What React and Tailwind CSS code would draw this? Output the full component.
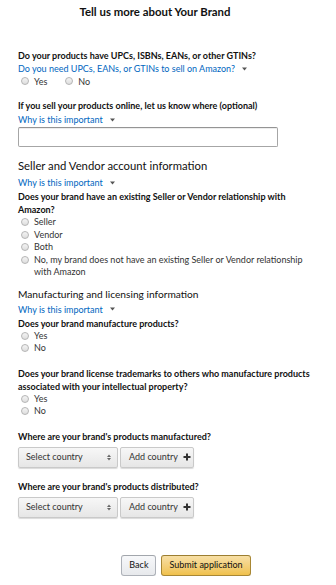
import React from 'react';

const Caret = () => (
  <svg width="5" height="4" viewBox="0 0 5 4" className="ml-[7px] inline-block">
    <path d="M0 0.5 L5 0.5 L2.5 3.5 Z" fill="#555" />
  </svg>
);

const WhyLink = ({ text = 'Why is this important', className = '' }) => (
  <div className={`flex items-center text-[9px] leading-[13px] text-[#0066c0] ${className}`}>
    <span>{text}</span>
    <Caret />
  </div>
);

const Radio = ({ label }) => (
  <span className="inline-flex items-start">
    <span className="mt-[2px] mr-[5px] h-[8px] w-[8px] shrink-0 rounded-full border border-[#b5b5b5] bg-gradient-to-b from-[#f4f4f4] to-[#dedede]" />
    <span>{label}</span>
  </span>
);

const RadioList = ({ options, className = '' }) => (
  <div className={`flex flex-col pl-[3px] text-[9px] leading-[12.5px] text-[#333] ${className}`}>
    {options.map((o) => (
      <Radio key={o} label={o} />
    ))}
  </div>
);

const Question = ({ children, className = '' }) => (
  <div className={`text-[9px] font-bold leading-[13px] text-[#111] ${className}`}>{children}</div>
);

const CountryRow = () => (
  <div className="flex gap-[2px]">
    <div className="flex h-[21px] w-[100px] items-center justify-between rounded-[2px] border border-[#c9c9c9] bg-gradient-to-b from-[#f7f7f7] to-[#e6e6e6] pl-[7px] pr-[6px] text-[9px] text-[#333] shadow-[0_1px_1px_rgba(0,0,0,0.15)]">
      <span>Select country</span>
      <svg width="4" height="7" viewBox="0 0 4 7">
        <path d="M0 3 L4 3 L2 0.5 Z" fill="#666" />
        <path d="M0 4 L4 4 L2 6.5 Z" fill="#666" />
      </svg>
    </div>
    <div className="flex h-[21px] w-[74px] items-center rounded-[2px] border border-[#c9c9c9] bg-gradient-to-b from-[#f7f7f7] to-[#e6e6e6] pl-[8px] text-[9px] text-[#333] shadow-[0_1px_1px_rgba(0,0,0,0.15)]">
      <span>Add country</span>
      <svg width="8" height="8" viewBox="0 0 8 8" className="ml-[5px]">
        <path d="M3 0.5 H5 V3 H7.5 V5 H5 V7.5 H3 V5 H0.5 V3 H3 Z" fill="#333" />
      </svg>
    </div>
  </div>
);

export default function App() {
  return (
    <div className="min-h-[585px] w-[336px] bg-white px-[18px] font-['Lato','Liberation_Sans',sans-serif] text-[#111]">
      <h1 className="pt-[4px] pr-[26px] text-center text-[11.4px] font-bold leading-[16px] text-[#111]">
        Tell us more about Your Brand
      </h1>

      <Question className="mt-[29px]">Do your products have UPCs, ISBNs, EANs, or other GTINs?</Question>
      <WhyLink text="Do you need UPCs, EANs, or GTINs to sell on Amazon?" />
      <div className="flex gap-[18px] pl-[3px] text-[9px] leading-[13px] text-[#333]">
        <Radio label="Yes" />
        <Radio label="No" />
      </div>

      <Question className="mt-[11px]">If you sell your products online, let us know where (optional)</Question>
      <WhyLink className="mt-[1px]" />
      <input
        type="text"
        className="mt-[1px] block h-[20px] w-[260px] rounded-[2px] border border-[#a6a6a6] border-t-[#949494] bg-white shadow-[inset_0_1px_0_rgba(0,0,0,0.07)] outline-none"
      />

      <h2 className="mt-[11px] text-[11.3px] font-normal leading-[16px] text-[#111]">
        Seller and Vendor account information
      </h2>
      <WhyLink className="mt-[2px]" />
      <Question className="mt-[1px]">
        Does your brand have an existing Seller or Vendor relationship with Amazon?
      </Question>
      <RadioList
        options={[
          'Seller',
          'Vendor',
          'Both',
          'No, my brand does not have an existing Seller or Vendor relationship with Amazon',
        ]}
      />

      <h2 className="mt-[7px] text-[10.2px] font-normal leading-[16px] text-[#111]">
        Manufacturing and licensing information
      </h2>
      <WhyLink className="mt-[1px]" />
      <Question className="mt-[1px]">Does your brand manufacture products?</Question>
      <RadioList options={['Yes', 'No']} />

      <Question className="mt-[12px]">
        Does your brand license trademarks to others who manufacture products associated with your
        intellectual property?
      </Question>
      <RadioList options={['Yes', 'No']} />

      <Question className="mt-[12px]">Where are your brand's products manufactured?</Question>
      <div className="mt-[4px]">
        <CountryRow />
      </div>

      <Question className="mt-[12px]">Where are your brand's products distributed?</Question>
      <div className="mt-[4px]">
        <CountryRow />
      </div>

      <div className="mt-[37px] flex justify-center gap-[5px] pl-[36px]">
        <button className="h-[21px] rounded-[3px] border border-[#adb1b8] border-t-[#a2a6ac] bg-gradient-to-b from-[#f7f8fa] to-[#e7e9ec] px-[7px] text-[9px] text-[#111]">
          Back
        </button>
        <button className="h-[21px] rounded-[3px] border border-[#a88734] border-t-[#9c7e31] bg-gradient-to-b from-[#f7dfa5] to-[#f0c14b] px-[7px] text-[9px] text-[#111]">
          Submit application
        </button>
      </div>
    </div>
  );
}
